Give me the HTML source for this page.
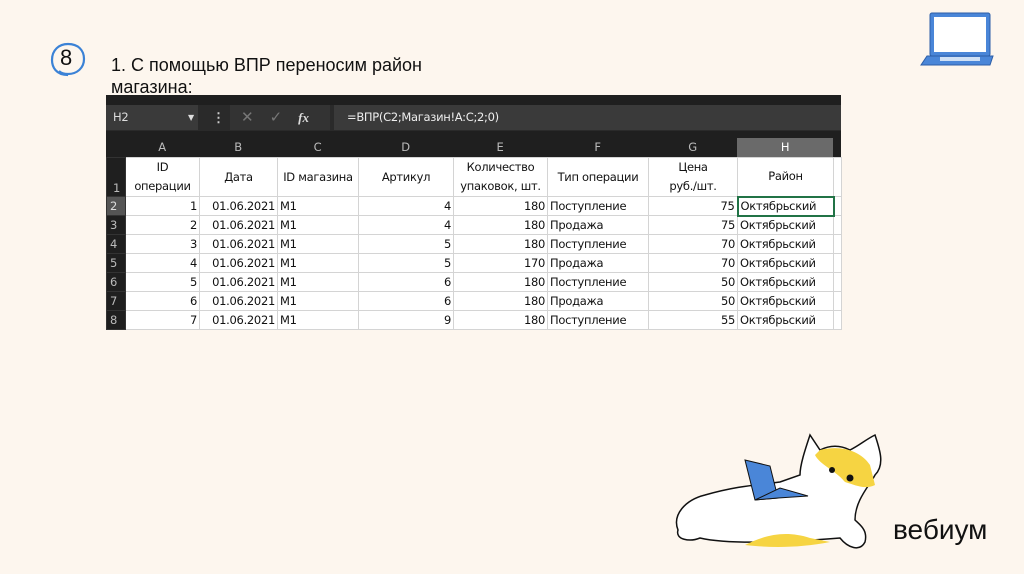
<!DOCTYPE html>
<html><head><meta charset="utf-8"><style>
body{margin:0;width:1024px;height:574px;background:#fdf6ee;position:relative;overflow:hidden;font-family:"Liberation Sans",sans-serif}
.a{position:absolute}
.xl{font-family:"DejaVu Sans","Liberation Sans",sans-serif;font-size:11.5px;letter-spacing:-0.3px}
table{border-collapse:collapse;table-layout:fixed}
tr{height:19px}
td{border:1px solid #d4d4d4;padding:0 2px;line-height:16px;white-space:nowrap;overflow:hidden;color:#111}
td.n{background:#1f1f1f;color:#bbb;border-color:#333;text-align:left;padding-left:3px}
td.r{text-align:right}
tr.h{height:39px}
tr.h td{text-align:center;line-height:19px}
</style></head><body>
<svg class="a" style="left:48px;top:40px" width="42" height="40" viewBox="0 0 42 40"><path d="M20 35 C8 35 4 27 4 20 C4 10 11 4 20 4 C30 4 36 10 36 19 C36 28 29 34 20 34 C16 34 13 33 11 31" fill="none" stroke="#3b82d6" stroke-width="2.2"/></svg>
<div class="a" style="left:60px;top:45px;font-size:22px;color:#111">8</div>
<div class="a" style="left:111px;top:54px;font-size:18px;line-height:22px;color:#111">1. С помощью ВПР переносим район<br>магазина:</div>
<svg class="a" style="left:918px;top:10px" width="76" height="58" viewBox="0 0 76 58"><rect x="12" y="3" width="60" height="43" rx="2" fill="#4a86d8" stroke="#2d5fa8" stroke-width="1"/><rect x="16" y="7" width="52" height="35" fill="#fff"/><path d="M9 46 L75 46 L72 55 L3 55 Z" fill="#4a86d8" stroke="#2d5fa8"/><rect x="22" y="47" width="40" height="4" fill="#cfe0f5"/></svg>
<div class="a" style="left:106px;top:95px;width:735px;height:233px;background:#1f1f1f"></div>
<div class="a" style="left:106px;top:105px;width:735px;height:26px;background:#2a2a2a"></div>
<div class="a xl" style="left:106px;top:105px;width:92px;height:25px;background:#3a3a3a;color:#ddd;line-height:25px;padding-left:7px;box-sizing:border-box">H2<span style="position:absolute;left:82px;font-size:8px">▼</span></div>
<div class="a" style="left:212px;top:110px;color:#ccc;font-size:13px;font-weight:bold">⋮</div>
<div class="a" style="left:230px;top:105px;width:100px;height:25px;background:#333;color:#777;font-size:15px;line-height:25px"><span style="margin-left:11px">✕</span><span style="margin-left:16px">✓</span><span style="margin-left:16px;color:#ddd;font-style:italic;font-family:'Liberation Serif',serif;font-weight:bold;font-size:13px">fx</span></div>
<div class="a xl" style="left:334px;top:105px;width:507px;height:25px;background:#3a3a3a;color:#eee;line-height:25px;padding-left:13px;box-sizing:border-box">=ВПР(C2;Магазин!A:C;2;0)</div>
<div class="a xl" style="left:106px;top:138px;height:19px;width:735px;color:#bbb;line-height:19px">
<span class="a" style="left:19px;width:74px;text-align:center">A</span><span class="a" style="left:93px;width:78px;text-align:center">B</span><span class="a" style="left:171px;width:81px;text-align:center">C</span><span class="a" style="left:252px;width:95px;text-align:center">D</span><span class="a" style="left:347px;width:94px;text-align:center">E</span><span class="a" style="left:441px;width:101px;text-align:center">F</span><span class="a" style="left:542px;width:89px;text-align:center">G</span><span class="a" style="left:631px;width:96px;text-align:center;background:#6a6a6a;color:#fff">H</span></div>
<table class="a xl" style="left:106px;top:157px;width:735px;background:#fff">
<colgroup><col style="width:19px"><col style="width:74px"><col style="width:78px"><col style="width:81px"><col style="width:95px"><col style="width:94px"><col style="width:101px"><col style="width:89px"><col style="width:96px"><col style="width:8px"></colgroup>
<tr class="h"><td class="n" style="vertical-align:bottom;line-height:16px">1</td><td>ID<br>операции</td><td>Дата</td><td>ID магазина</td><td>Артикул</td><td>Количество<br>упаковок, шт.</td><td>Тип операции</td><td>Цена<br>руб./шт.</td><td>Район</td><td></td></tr>
<tr><td class="n" style="background:#555;color:#ddd">2</td><td class="r">1</td><td class="r">01.06.2021</td><td>M1</td><td class="r">4</td><td class="r">180</td><td>Поступление</td><td class="r">75</td><td style="border:2px solid #217346">Октябрьский</td><td></td></tr>
<tr><td class="n">3</td><td class="r">2</td><td class="r">01.06.2021</td><td>M1</td><td class="r">4</td><td class="r">180</td><td>Продажа</td><td class="r">75</td><td>Октябрьский</td><td></td></tr>
<tr><td class="n">4</td><td class="r">3</td><td class="r">01.06.2021</td><td>M1</td><td class="r">5</td><td class="r">180</td><td>Поступление</td><td class="r">70</td><td>Октябрьский</td><td></td></tr>
<tr><td class="n">5</td><td class="r">4</td><td class="r">01.06.2021</td><td>M1</td><td class="r">5</td><td class="r">170</td><td>Продажа</td><td class="r">70</td><td>Октябрьский</td><td></td></tr>
<tr><td class="n">6</td><td class="r">5</td><td class="r">01.06.2021</td><td>M1</td><td class="r">6</td><td class="r">180</td><td>Поступление</td><td class="r">50</td><td>Октябрьский</td><td></td></tr>
<tr><td class="n">7</td><td class="r">6</td><td class="r">01.06.2021</td><td>M1</td><td class="r">6</td><td class="r">180</td><td>Продажа</td><td class="r">50</td><td>Октябрьский</td><td></td></tr>
<tr><td class="n">8</td><td class="r">7</td><td class="r">01.06.2021</td><td>M1</td><td class="r">9</td><td class="r">180</td><td>Поступление</td><td class="r">55</td><td>Октябрьский</td><td></td></tr>
</table>
<svg class="a" style="left:670px;top:430px" width="220" height="135" viewBox="0 0 220 135">
<path d="M35 65 C15 70 2 85 8 100 C5 110 20 112 30 108 C60 115 120 112 170 108 C178 118 190 122 195 112 C198 100 190 95 185 90 C185 70 200 55 205 45 C215 35 210 20 205 5 C195 10 190 15 180 20 C170 15 160 15 150 20 L140 5 C135 20 130 35 130 45 L110 52 C90 55 70 55 35 65 Z" fill="#fff" stroke="#111" stroke-width="1.5"/>
<path d="M150 20 C170 15 190 20 200 35 L205 55 C195 60 185 55 175 52 C165 40 150 35 145 25 Z" fill="#f6d442"/>
<path d="M75 115 C95 105 115 100 140 108 L160 112 C130 118 100 118 75 115 Z" fill="#f6d442"/>
<path d="M75 30 L100 36 L108 68 L85 70 Z" fill="#4a86d8" stroke="#111"/>
<path d="M85 70 L108 68 L138 66 L110 58 Z" fill="#4a86d8" stroke="#111"/>
<circle cx="162" cy="40" r="3" fill="#111"/><circle cx="180" cy="48" r="3.5" fill="#111"/>
</svg>
<div class="a" style="left:893px;top:514px;font-size:28px;color:#111">вебиум</div>
</body></html>
